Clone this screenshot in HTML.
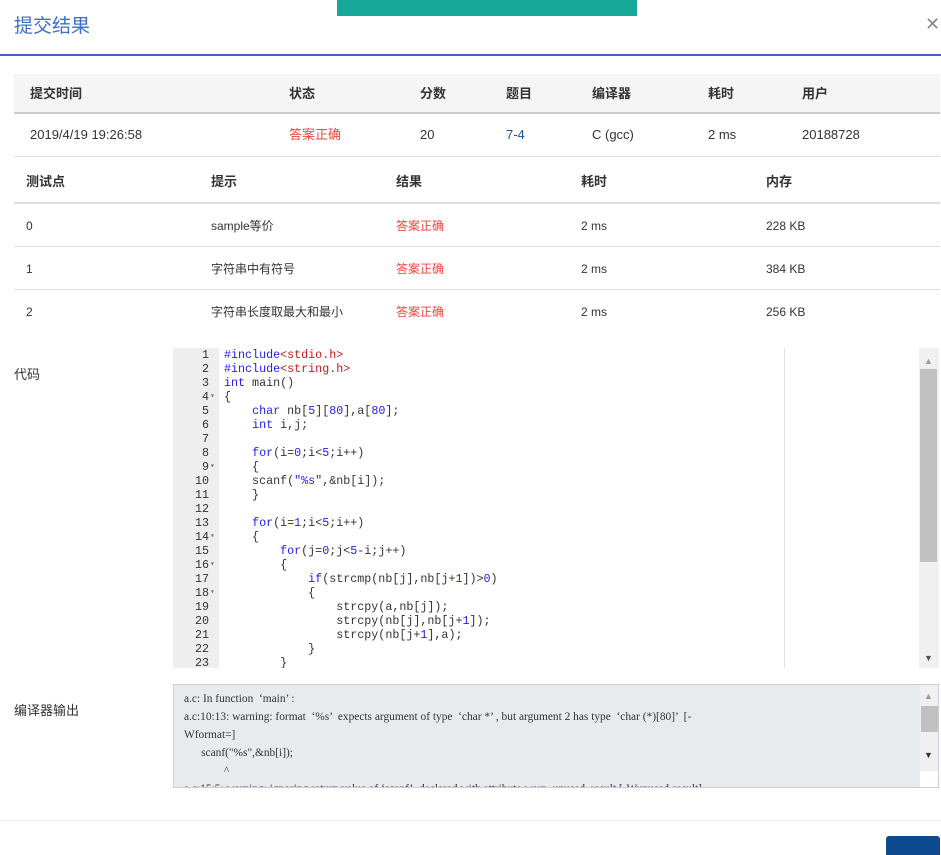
<!DOCTYPE html>
<html><head><meta charset="utf-8"><style>
*{margin:0;padding:0;box-sizing:border-box}
body{width:941px;height:855px;overflow:hidden;background:#fff;font-family:"Liberation Sans","Noto Sans CJK SC",sans-serif;font-size:13px;color:#333;position:relative}
.a{position:absolute;white-space:nowrap;line-height:16px}
.toast{left:337px;top:0;width:300px;height:16px;background:#17a89a}
.title{left:14px;top:16px;font-size:19px;line-height:22px;color:#3b6fc9}
.close{left:925px;top:16px;font-size:18px;color:#888}
.hl{left:0;top:54px;width:941px;height:2px;background:#3a66c0}
.th{font-weight:bold;color:#333}
.red{color:#f0463c}
.line{height:1px;background:#ddd}
.code{left:173px;top:348px;width:766px;height:320px;background:#fff;overflow:hidden}
.gut{left:0;top:0;width:46px;height:320px;background:#eeeeee}
pre{font-family:"Liberation Mono",monospace;font-size:11.7px;line-height:14px !important;color:#333;white-space:pre !important}
.k{color:#1e1ef0}.s{color:#c41a16}.n{color:#1e1ef0}
.out{left:173px;top:684px;width:766px;height:104px;background:#e8ebee;border:1px solid #ccd;overflow:hidden}
.out pre{font-family:"Liberation Serif",serif;font-size:11.4px;line-height:18px !important;padding:5px 0 0 10px;color:#333;width:730px}
</style></head><body>
<div class="a toast"></div>
<div class="a title">提交结果</div>
<div class="a close">✕</div>
<div class="a hl"></div>

<div class="a" style="left:14px;top:74px;width:926px;height:40px;background:#f5f5f5;border-bottom:2px solid #ccc"></div>
<div class="a th" style="left:30px;top:86px">提交时间</div>
<div class="a th" style="left:289px;top:86px">状态</div>
<div class="a th" style="left:420px;top:86px">分数</div>
<div class="a th" style="left:506px;top:86px">题目</div>
<div class="a th" style="left:592px;top:86px">编译器</div>
<div class="a th" style="left:708px;top:86px">耗时</div>
<div class="a th" style="left:802px;top:86px">用户</div>
<div class="a" style="left:30px;top:127px">2019/4/19 19:26:58</div>
<div class="a red" style="left:289px;top:127px">答案正确</div>
<div class="a" style="left:420px;top:127px">20</div>
<div class="a" style="left:506px;top:127px;color:#1a4f9c">7-4</div>
<div class="a" style="left:592px;top:127px">C (gcc)</div>
<div class="a" style="left:708px;top:127px">2 ms</div>
<div class="a" style="left:802px;top:127px">20188728</div>
<div class="a line" style="left:14px;top:156px;width:926px"></div>

<div class="a th" style="left:26px;top:174px">测试点</div>
<div class="a th" style="left:211px;top:174px">提示</div>
<div class="a th" style="left:396px;top:174px">结果</div>
<div class="a th" style="left:581px;top:174px">耗时</div>
<div class="a th" style="left:766px;top:174px">内存</div>
<div class="a" style="left:14px;top:202px;width:926px;height:2px;background:#ddd"></div>

<div class="a" style="left:26px;top:218px;font-size:12px">0</div><div class="a" style="left:211px;top:218px;font-size:12px">sample等价</div><div class="a red" style="left:396px;top:218px;font-size:12px">答案正确</div><div class="a" style="left:581px;top:218px;font-size:12px">2 ms</div><div class="a" style="left:766px;top:218px;font-size:12px">228 KB</div>
<div class="a line" style="left:14px;top:246px;width:926px"></div>
<div class="a" style="left:26px;top:261px;font-size:12px">1</div><div class="a" style="left:211px;top:261px;font-size:12px">字符串中有符号</div><div class="a red" style="left:396px;top:261px;font-size:12px">答案正确</div><div class="a" style="left:581px;top:261px;font-size:12px">2 ms</div><div class="a" style="left:766px;top:261px;font-size:12px">384 KB</div>
<div class="a line" style="left:14px;top:289px;width:926px"></div>
<div class="a" style="left:26px;top:304px;font-size:12px">2</div><div class="a" style="left:211px;top:304px;font-size:12px">字符串长度取最大和最小</div><div class="a red" style="left:396px;top:304px;font-size:12px">答案正确</div><div class="a" style="left:581px;top:304px;font-size:12px">2 ms</div><div class="a" style="left:766px;top:304px;font-size:12px">256 KB</div>

<div class="a" style="left:14px;top:367px">代码</div>
<div class="a code">
<div class="a gut"></div>
<pre class="a" style="left:0;top:0;width:36px;text-align:right;color:#333">1
2
3
4
5
6
7
8
9
10
11
12
13
14
15
16
17
18
19
20
21
22
23</pre>
<pre class="a" style="left:37px;top:0;color:#777;font-size:8px">



▾




▾




▾

▾

▾</pre>
<pre class="a" style="left:51px;top:0"><span class="k">#include</span><span class="s">&lt;stdio.h&gt;</span>
<span class="k">#include</span><span class="s">&lt;string.h&gt;</span>
<span class="k">int</span> main()
{
    <span class="k">char</span> nb[<span class="n">5</span>][<span class="n">80</span>],a[<span class="n">80</span>];
    <span class="k">int</span> i,j;

    <span class="k">for</span>(i=<span class="n">0</span>;i&lt;<span class="n">5</span>;i++)
    {
    scanf(<span class="k">"%s"</span>,&amp;nb[i]);
    }

    <span class="k">for</span>(i=<span class="n">1</span>;i&lt;<span class="n">5</span>;i++)
    {
        <span class="k">for</span>(j=<span class="n">0</span>;j&lt;<span class="n">5</span>-i;j++)
        {
            <span class="k">if</span>(strcmp(nb[j],nb[j+<span class="n">1</span>])&gt;<span class="n">0</span>)
            {
                strcpy(a,nb[j]);
                strcpy(nb[j],nb[j+<span class="n">1</span>]);
                strcpy(nb[j+<span class="n">1</span>],a);
            }
        }</pre>
<div class="a" style="left:611px;top:0;width:1px;height:320px;background:#e4e4e4"></div>
<div class="a" style="left:746px;top:0;width:20px;height:320px;background:#f0f0f0"></div>
<div class="a" style="left:747px;top:21px;width:17px;height:193px;background:#c1c1c1"></div>
<div class="a" style="left:751px;top:5px;color:#999;font-size:9px">▲</div>
<div class="a" style="left:751px;top:302px;color:#555;font-size:9px">▼</div>
</div>

<div class="a" style="left:14px;top:703px">编译器输出</div>
<div class="a out">
<pre>a.c: In function  ‘main’ :
a.c:10:13: warning: format  ‘%s’  expects argument of type  ‘char *’ , but argument 2 has type  ‘char (*)[80]’  [-
Wformat=]
      scanf("%s",&amp;nb[i]);
              ^
a.c:15:5: warning: ignoring return value of ‘scanf’, declared with attribute warn_unused_result [-Wunused-result]</pre>
<div class="a" style="left:746px;top:0;width:19px;height:86px;background:#f0f0f0"></div>
<div class="a" style="left:747px;top:21px;width:17px;height:26px;background:#c1c1c1"></div>
<div class="a" style="left:750px;top:3px;color:#999;font-size:9px">▲</div>
<div class="a" style="left:750px;top:62px;color:#333;font-size:9px">▼</div>
<div class="a" style="left:746px;top:86px;width:19px;height:18px;background:#fff"></div>
</div>

<div class="a line" style="left:0;top:820px;width:941px;background:#e8e8e8"></div>
<div class="a" style="left:886px;top:836px;width:54px;height:19px;background:#0d4a90;border-radius:3px 3px 0 0"></div>
</body></html>
